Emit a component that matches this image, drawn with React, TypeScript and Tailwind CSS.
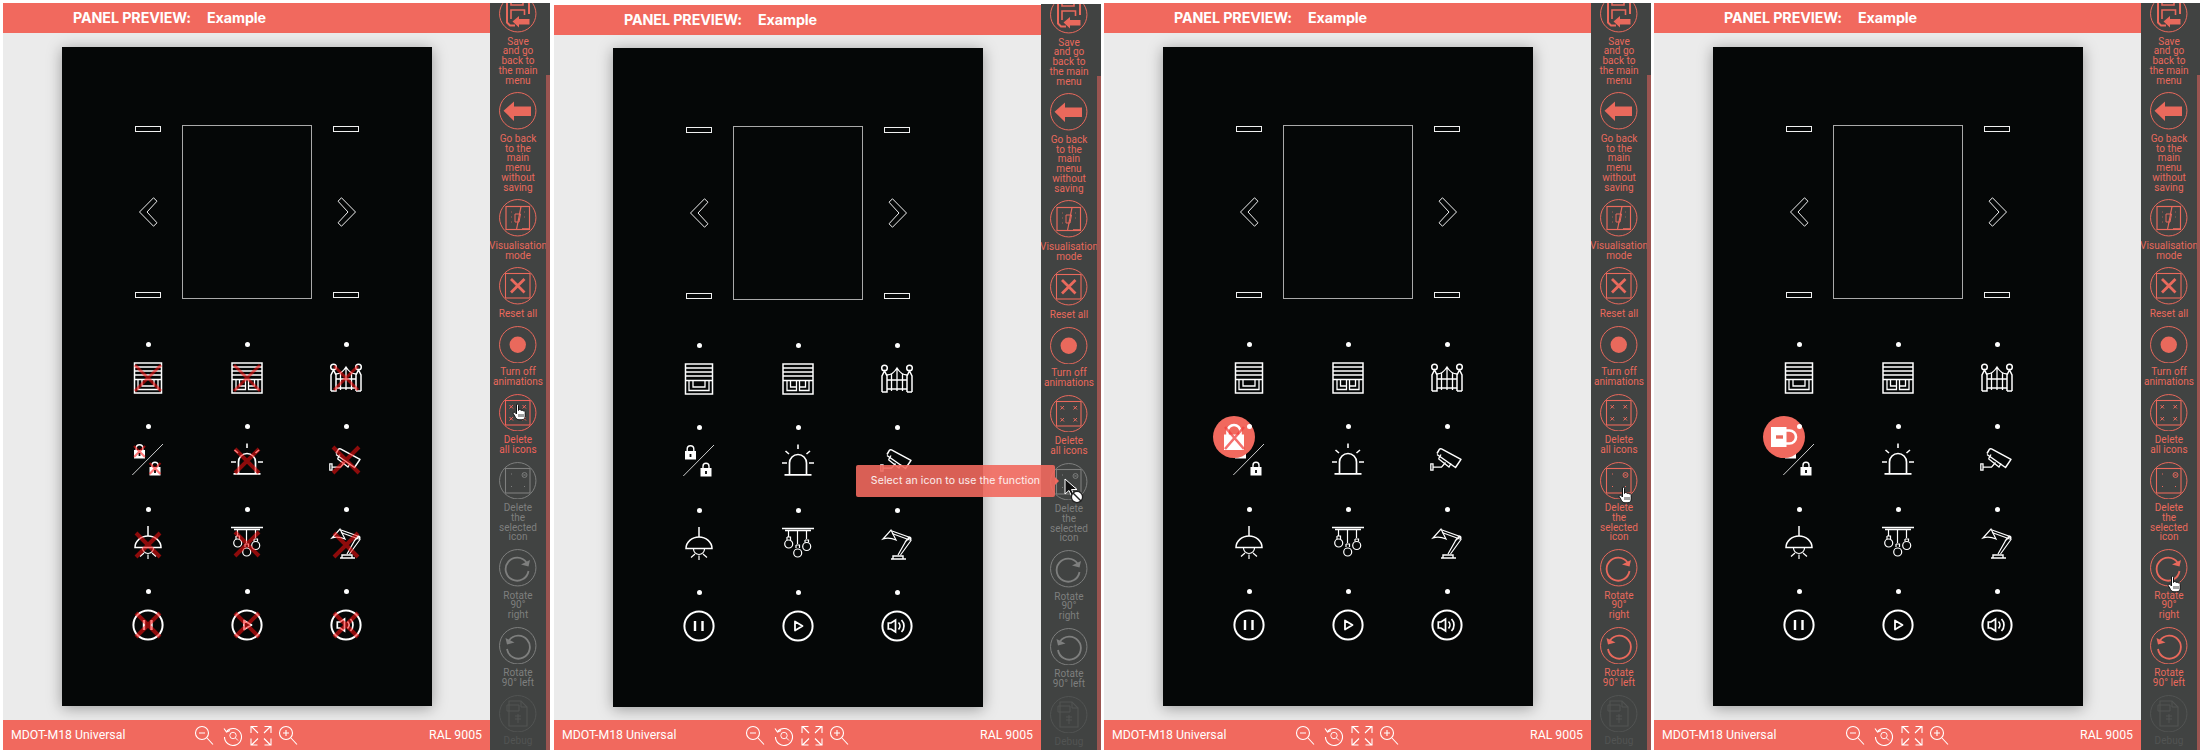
import React from "react";

const RED = "#e9695c";

type IconProps = { crossed?: boolean };
const X = ({ c = 17, r = 12, w = 4, cy }: { c?: number; r?: number; w?: number; cy?: number }) => {
  const y = cy ?? c;
  return (
    <g stroke="#ff0f0f" strokeOpacity="0.55" strokeWidth={w} fill="none">
      <path d={`M${c - r} ${y - r}L${c + r} ${y + r}M${c + r} ${y - r}L${c - r} ${y + r}`} />
    </g>
  );
};

const S = ({ children }: { children: React.ReactNode }) => (
  <svg width="34" height="34" viewBox="0 0 34 34" fill="none" stroke="#fff" strokeWidth="1.5" className="block overflow-visible">
    {children}
  </svg>
);

const Blind1 = ({ crossed }: IconProps) => (
  <S>
    <rect x="3.5" y="2" width="27" height="30" />
    <path d="M3.5 6H30.5M3.5 10H30.5M3.5 14H30.5M3.5 18.5H30.5" />
    <path d="M7 19V28.5H27V19M11 19V25H23V19" strokeWidth="1.3" />
    {crossed && <X r={13} w={3} />}
  </S>
);
const Blind2 = ({ crossed }: IconProps) => (
  <S>
    <rect x="2" y="2" width="30" height="30" />
    <path d="M2 6H32M2 10H32M2 14H32M2 18.5H32" />
    <path d="M6 19V28.5H15.5V19M18.5 19V28.5H28V19M9.5 19V25H15.5M18.5 25H24.5V19" strokeWidth="1.3" />
    {crossed && <X r={13} w={3} />}
  </S>
);
const Gate = ({ crossed }: IconProps) => (
  <S>
    <circle cx="4.5" cy="6" r="2.8" />
    <circle cx="29.5" cy="6" r="2.8" />
    <path d="M2 30V14L4.5 9L7 14V30H2M32 30V14L29.5 9L27 14V30H27" />
    <path d="M7 27H27M7 18H27M7 13C11 13 14 11 17 6C20 11 23 13 27 13M11.5 12V29M17 6V29M22.5 12V29" strokeWidth="1.3" />
    <path d="M27 30H32" />
    {crossed && <X r={12} w={3} />}
  </S>
);
const Lock = ({ x, y, crossed, open }: { x: number; y: number; crossed?: boolean; open?: boolean }) => (
  <g transform={`translate(${x} ${y})`}>
    <path d={open ? "M2.5 6V3.8A3 3 0 0 1 8.5 3.8V6" : "M2.2 6V3.6A3.3 3.3 0 0 1 8.8 3.6V6"} strokeWidth="1.4" />
    <rect x="0" y="5.5" width="11" height="8.5" fill="#fff" stroke="none" />
    <path d="M5.5 8.5V11.5" stroke="#050707" strokeWidth="1.8" />
    {crossed && <X c={5.5} cy={7} r={5.5} w={2.2} />}
  </g>
);
const Locks = ({ crossed }: IconProps) => (
  <S>
    <path d="M1.3 32L32 1" strokeWidth="0.8" />
    <Lock x={3} y={1.5} crossed={crossed} />
    <Lock x={18.5} y={18.5} crossed={crossed} open />
  </S>
);
const Beacon = ({ crossed }: IconProps) => (
  <S>
    <path d="M17 .5V5M4.5 7L8 10M29 7L25.5 10M1 19H6M28 19H33" strokeWidth="1.6" />
    <path d="M8.5 30V19A8.5 8.5 0 0 1 25.5 19V30M3.5 30.8H30.5" strokeWidth="1.7" />
    {crossed && <X cy={18} r={12} w={4} />}
  </S>
);
const Camera = ({ crossed }: IconProps) => (
  <S>
    <path d="M7 10.5L9.5 6.2Q10.3 5.3 11.5 5.9L31 16.3L25.5 24.5L7 11.5" strokeLinejoin="round" />
    <path d="M8.5 15.8L11 11.5M8.5 15.8L19 24L21 20.5" strokeWidth="1.3" />
    <path d="M.8 20.8H3V27.2H.8ZM3 24.2H11.5L15.5 19.5" strokeWidth="1.3" />
    {crossed && <X cy={17} r={13} w={4} />}
  </S>
);
const Pendant = ({ crossed }: IconProps) => (
  <S>
    <path d="M17 0V10" />
    <path d="M4 21.5A13 11.5 0 0 1 30 21.5Z" />
    <path d="M11.5 22A5.5 5.5 0 0 0 22.5 22" strokeWidth="1.2" />
    <path d="M17 28.5V33M9 30.5L13 27M25 30.5L21 27" strokeWidth="1.2" />
    {crossed && <X cy={19} r={12} w={4} />}
  </S>
);
const Chandelier = ({ crossed }: IconProps) => (
  <S>
    <path d="M1 1.5H33M4 3.5H30" strokeWidth="1.5" />
    <path d="M7.5 3V10M16.5 3V17M25.5 3V12" strokeWidth="1.2" />
    <g strokeWidth="1.2">
      <path d="M6 10H9.5V13M6 10V13M15 18H18.5V21M15 18V21M24 13H27.5V15.5M24 13V15.5" />
      <circle cx="7.7" cy="17" r="4" />
      <circle cx="16.7" cy="26" r="4" />
      <circle cx="25.7" cy="19.5" r="4" />
    </g>
    {crossed && <X cy={18} r={12} w={4} />}
  </S>
);
const DeskLamp = ({ crossed }: IconProps) => (
  <S>
    <path d="M3 12L11 3L16 13Q9 10 3 12Z" strokeWidth="1.2" />
    <path d="M12 4L30 10.5L25 15M12 6.5L27 12L18 28M30 10.5L31 13.5L20.5 28" strokeWidth="1.2" />
    <circle cx="29.5" cy="11.5" r="1.5" strokeWidth="1.1" />
    <path d="M11 32H26M13 32V29H23V32" strokeWidth="1.4" />
    {crossed && <X cy={19} r={12} w={4} />}
  </S>
);
const Ring = ({ children, crossed }: IconProps & { children: React.ReactNode }) => (
  <S>
    <circle cx="17" cy="17" r="14.6" strokeWidth="2" />
    {children}
    {crossed && <X r={12} w={4} />}
  </S>
);
const Pause = ({ crossed }: IconProps) => (
  <Ring crossed={crossed}>
    <path d="M13 12V22M20.5 12V22" strokeWidth="2.4" />
  </Ring>
);
const Play = ({ crossed }: IconProps) => (
  <Ring crossed={crossed}>
    <path d="M14 12.5L21.5 17L14 21.5Z" strokeWidth="1.8" strokeLinejoin="round" />
  </Ring>
);
const Volume = ({ crossed }: IconProps) => (
  <Ring crossed={crossed}>
    <path d="M8.3 14H11L15.5 11V23L11 20H8.3Z" strokeWidth="1.7" />
    <path d="M18.5 13.5A5 5 0 0 1 18.5 20.5M21.5 11A8.5 8.5 0 0 1 21.5 23" strokeWidth="1.7" />
  </Ring>
);

const SI = ({ children }: { children: React.ReactNode }) => (
  <svg width="37.5" height="37.5" viewBox="0 0 37.5 37.5" fill="none" stroke="currentColor" strokeWidth="1" className="block">
    <circle cx="18.75" cy="18.75" r="18.2" />
    {children}
  </svg>
);

const SideIcons: Record<string, React.ReactNode> = {
  save: (
    <>
      <path d="M8 3V27.5L11 30.5H16M30 19V8L25 3H8" strokeWidth="2" />
      <path d="M12 3V10H24V3M19 5V8M12 24V15H25.5V20" strokeWidth="1.6" />
      <path d="M13.5 26.5L20 21V24H30.5V29.5H20V32.5Z" fill="currentColor" stroke="none" />
    </>
  ),
  back: <path d="M4.5 18.75L15 9.5V14.5H32V24H15V29Z" fill="currentColor" stroke="none" />,
  vis: (
    <>
      <rect x="7" y="7.5" width="23.5" height="23" strokeWidth="1.2" />
      <path d="M22 7.5L17.5 30.5" strokeWidth="1.2" />
      <path d="M16 15H21.5L20 23H16Z" strokeWidth="1" />
      <path d="M12 13H12.8M12 18H12.8M12 23H12.8M25 13H25.8M25 18H25.8M23 29.5H30" strokeWidth=".8" />
    </>
  ),
  reset: (
    <>
      <rect x="6.5" y="6.5" width="24.5" height="24.5" strokeWidth="1.1" />
      <path d="M12 12L25.5 25.5M25.5 12L12 25.5" strokeWidth="2.8" />
    </>
  ),
  rec: <circle cx="18.75" cy="18.75" r="8.2" fill="currentColor" stroke="none" />,
  delAll: (
    <>
      <rect x="6.5" y="6.5" width="24.5" height="24.5" strokeWidth="1.1" />
      <path d="M10.5 11L14 14.5M14 11L10.5 14.5M23.5 11L27 14.5M27 11L23.5 14.5M10.5 23L14 26.5M14 23L10.5 26.5M23.5 23L27 26.5M27 23L23.5 26.5" strokeWidth="1" />
    </>
  ),
  delOne: (
    <>
      <rect x="6.5" y="6.5" width="24.5" height="24.5" strokeWidth="1.1" />
      <circle cx="25.5" cy="13" r="2.5" strokeWidth=".9" />
      <path d="M24 11.5L27 14.5M27 11.5L24 14.5" strokeWidth=".7" />
      <path d="M12 12H13M12 24.5H13M25 24.5H26" strokeWidth="1" />
    </>
  ),
  rotR: (
    <>
      <path d="M27.5 13.5A11.5 11.5 0 1 0 29.5 22" strokeWidth="1.8" />
      <path d="M22 15.5L29.5 17.5L31 11Z" fill="currentColor" stroke="none" />
    </>
  ),
  rotL: (
    <>
      <path d="M10 13.5A11.5 11.5 0 1 1 8 22" strokeWidth="1.8" />
      <path d="M15.5 15.5L8 17.5L6.5 11Z" fill="currentColor" stroke="none" />
    </>
  ),
  debug: (
    <>
      <path d="M10 6H22L28 12V31H10Z" strokeWidth="1.1" />
      <path d="M22 6V12H28M8 10H20V16H8ZM19 19V28M16 21H22M16 24H22" strokeWidth="1" />
    </>
  ),
};

type Tone = "on" | "hot" | "off" | "dim";
const toneText: Record<Tone, string> = {
  on: "text-[#e9695c]",
  hot: "text-[#f0625a]",
  off: "text-[#7e7f7e]",
  dim: "text-[#525453]",
};

const items: { key: string; lines: string[] }[] = [
  { key: "save", lines: ["Save", "and go", "back to", "the main", "menu"] },
  { key: "back", lines: ["Go back", "to the", "main", "menu", "without", "saving"] },
  { key: "vis", lines: ["Visualisation", "mode"] },
  { key: "reset", lines: ["Reset all"] },
  { key: "rec", lines: ["Turn off", "animations"] },
  { key: "delAll", lines: ["Delete", "all icons"] },
  { key: "delOne", lines: ["Delete", "the", "selected", "icon"] },
  { key: "rotR", lines: ["Rotate", "90°", "right"] },
  { key: "rotL", lines: ["Rotate", "90° left"] },
  { key: "debug", lines: ["Debug"] },
];

const Hand = () => (
  <svg width="15" height="18" viewBox="0 0 15 18" className="block">
    <path d="M4.5 1.5C5.5 .8 6.5 1.3 6.5 2.5V7.5L7.5 6.5C8.5 6.3 9 6.8 9 7.5C10 6.8 11 7.2 11 8C12 7.5 13.2 8 13.2 9.2V13C13.2 15 12 16.8 10 16.8H7C5.5 16.8 4.5 16 3.5 14.5L1.2 10.5C.8 9.5 2 8.6 3 9.5L4.5 11Z" fill="#fff" stroke="#111" strokeWidth="1" />
    <path d="M7 11V14M9 11V14M11 11V14" stroke="#111" strokeWidth=".8" />
  </svg>
);

const Sidebar = ({ tones, hand, top }: { tones: Tone[]; hand?: string; top: string }) => (
  <div className="w-[60px] h-full bg-[#414342] overflow-hidden relative shrink-0">
    <div className="absolute right-0 bottom-0 top-[72px] w-[4px] bg-[#9a5450]" />
    <div className={`flex flex-col items-center w-[56px] gap-[7px] ${top}`}>
      {items.map((it, i) => (
        <div key={it.key} className={`flex flex-col items-center w-full ${toneText[tones[i]]}`}>
          <div className="relative mb-[4px]">
            <SI>{SideIcons[it.key]}</SI>
            {hand === it.key && (
              <div className={`absolute ${it.key === "rotR" ? "left-[17px] top-[26px]" : it.key === "delOne" ? "left-[18px] top-[24px]" : "left-[13px] top-[9px]"}`}>
                <Hand />
              </div>
            )}
          </div>
          <div className="font-['Roboto',sans-serif] text-[10px] leading-[9.75px] tracking-[0.05px] text-center whitespace-nowrap">
            {it.lines.map((l) => (
              <div key={l}>{l}</div>
            ))}
          </div>
        </div>
      ))}
    </div>
  </div>
);

const Dash = () => <div className="w-[26px] h-[6px] border border-[#f0f0f0]" />;
const ChevL = () => (
  <svg width="19" height="30" viewBox="0 0 19 30" fill="none" stroke="#f0f0f0" strokeWidth="1" className="block">
    <path d="M0.5 15L14.5 .8L18 4.2L8 15L18 25.8L14.5 29.2Z" />
  </svg>
);
const ChevR = () => (
  <svg width="19" height="30" viewBox="0 0 19 30" fill="none" stroke="#f0f0f0" strokeWidth="1" className="block">
    <path d="M18.5 15L4.5 .8L1 4.2L11 15L1 25.8L4.5 29.2Z" />
  </svg>
);

const BigLock = ({ rotated, crossed }: { rotated?: boolean; crossed?: boolean }) => (
  <svg width="28" height="28" viewBox="0 0 28 28" fill="none" className="block overflow-visible">
    <g transform={rotated ? "rotate(90 14 14)" : undefined}>
      <path d="M7.5 12V8.5A6.5 6.5 0 0 1 20.5 8.5V12" stroke="#fff" strokeWidth="2.6" />
      <rect x="4" y="11.5" width="20" height="15.5" fill="#fff" />
      {rotated && <path d="M14 15V22" stroke={RED} strokeWidth="3.4" />}
    </g>
    {crossed && <path d="M5 4L24 26M24 4L5 26M14 14V17" stroke="#f2403e" strokeOpacity=".75" strokeWidth="2.6" />}
  </svg>
);

const Cell = ({ children, sel }: { children: React.ReactNode; sel?: React.ReactNode }) => (
  <div className="relative flex flex-col items-center gap-[14px]">
    <div className="relative z-10 w-[5px] h-[5px] rounded-full bg-white" />
    <div className="w-[34px] h-[34px]">{children}</div>
    {sel}
  </div>
);

const Panel = ({ crossed, sel, shift }: { crossed?: boolean; sel?: "a" | "b"; shift: string }) => (
  <div className={`w-[370px] h-[659px] bg-[#050707] shadow-[0_2px_14px_rgba(0,0,0,0.35)] flex flex-col items-center ${shift}`}>
    <div className="grid grid-cols-[68px_130px_68px] h-[174px] mt-[78px] justify-center">
      <div className="flex flex-col items-center justify-between py-[1px]">
        <Dash />
        <ChevL />
        <Dash />
      </div>
      <div className="border border-[#a9a9a9]" />
      <div className="flex flex-col items-center justify-between py-[1px]">
        <Dash />
        <ChevR />
        <Dash />
      </div>
    </div>
    <div className="grid grid-cols-[99px_99px_99px] justify-center gap-y-[29.4px] mt-[43px]">
      <Cell><Blind1 crossed={crossed} /></Cell>
      <Cell><Blind2 crossed={crossed} /></Cell>
      <Cell><Gate crossed={crossed} /></Cell>
      <Cell
        sel={
          sel && (
            <div className="absolute left-[13px] top-[-8px] w-[42px] h-[42px] rounded-full bg-[#f1695e] flex items-center justify-center">
              <BigLock rotated={sel === "b"} crossed={sel === "a"} />
            </div>
          )
        }
      >
        <Locks crossed={crossed} />
      </Cell>
      <Cell><Beacon crossed={crossed} /></Cell>
      <Cell><Camera crossed={crossed} /></Cell>
      <Cell><Pendant crossed={crossed} /></Cell>
      <Cell><Chandelier crossed={crossed} /></Cell>
      <Cell><DeskLamp crossed={crossed} /></Cell>
      <Cell><Pause crossed={crossed} /></Cell>
      <Cell><Play crossed={crossed} /></Cell>
      <Cell><Volume crossed={crossed} /></Cell>
    </div>
  </div>
);

const F = ({ children }: { children: React.ReactNode }) => (
  <svg width="20" height="20" viewBox="0 0 20 20" fill="none" stroke="#fff" strokeWidth="1.1" className="block overflow-visible">
    {children}
  </svg>
);

const Footer = () => (
  <div className="h-[30px] bg-[#f1695e] flex items-center justify-between pl-[8px] pr-[8px] text-white font-['Roboto',sans-serif] text-[12.3px] relative shrink-0">
    <span>MDOT-M18 Universal</span>
    <div className="absolute left-[192px] top-[6px] flex items-center gap-[8px]">
      <F>
        <circle cx="7" cy="7" r="6.5" />
        <path d="M12 12L18 18.5M4 7H10" />
      </F>
      <F>
        <path d="M3.5 5.5A8.5 8.5 0 1 1 1.5 11" stroke="#fff" />
        <path d="M1 2.5L3.5 6L7 4.5" />
        <circle cx="10" cy="9.5" r="3.2" strokeWidth=".9" />
        <path d="M12.5 12L15 14.5" strokeWidth=".9" />
      </F>
      <F>
        <path d="M0 7V0.5H6.5M0.5 0.5L7 7M20 7V0.5H13.5M19.5 0.5L13 7M0 12.5V19H6.5M0.5 19L7 12.5M20 12.5V19H13.5M19.5 19L13 12.5" />
      </F>
      <F>
        <circle cx="7" cy="7" r="6.5" />
        <path d="M12 12L18 18.5M4 7H10M7 4V10" />
      </F>
    </div>
    <span>RAL 9005</span>
  </div>
);

const Forbidden = () => (
  <svg width="22" height="26" viewBox="0 0 22 26" className="block">
    <path d="M2 1V16L6 12.5L8.5 18L11 17L8.5 11.5H14Z" fill="#111" stroke="#fff" strokeWidth="1" />
    <circle cx="14" cy="19" r="5.6" fill="#fff" stroke="#222" strokeWidth="1.3" />
    <path d="M10 15L18 23" stroke="#222" strokeWidth="1.4" />
  </svg>
);

type PaneProps = {
  cls: string;
  headTop: string;
  sideTop: string;
  panelShift: string;
  tones: Tone[];
  hand?: string;
  crossed?: boolean;
  sel?: "a" | "b";
  tooltip?: boolean;
};

const Pane = ({ cls, headTop, sideTop, panelShift, tones, hand, crossed, sel, tooltip }: PaneProps) => (
  <div className={`h-[750px] relative overflow-hidden flex items-start shrink-0 ${cls}`}>
    <div className="w-[487px] h-full flex flex-col bg-[#ebebeb] shrink-0">
      <div className={`bg-white shrink-0 ${headTop}`} />
      <div className="h-[30px] bg-[#f1695e] shrink-0 flex items-center gap-[16px] pl-[70px] text-white font-['Inter',sans-serif] font-bold text-[14.3px] tracking-[-0.1px]">
        <span>PANEL PREVIEW:</span>
        <span>Example</span>
      </div>
      <div className="flex-1 min-h-0 pl-[59px]">
        <Panel crossed={crossed} sel={sel} shift={panelShift} />
      </div>
      <Footer />
    </div>
    <div className="h-full flex flex-col shrink-0">
      <div className={`bg-white shrink-0 ${sideTop}`} />
      <div className="flex-1 min-h-0">
        <Sidebar tones={tones} hand={hand} top="-mt-[8px]" />
      </div>
    </div>
    {tooltip && (
      <>
        <div className="absolute left-[305px] top-[465px] w-[199px] h-[32px] rounded-[2px] bg-[#f1695e]/90 flex items-center justify-center text-white/90 font-['Inter',sans-serif] text-[10.5px] tracking-[0.1px] whitespace-nowrap">
          Select an icon to use the function
        </div>
        <div className="absolute left-[504px] top-[477px] w-0 h-0 border-y-[4px] border-y-transparent border-l-[4px] border-l-[#f1695e]" />
        <div className="absolute left-[512px] top-[478px]">
          <Forbidden />
        </div>
      </>
    )}
  </div>
);

export default function App() {
  const active: Tone[] = ["on", "on", "on", "on", "on", "on", "on", "on", "on", "dim"];
  const idle: Tone[] = ["on", "on", "on", "on", "on", "on", "off", "off", "off", "dim"];
  const hot: Tone[] = ["on", "on", "on", "on", "on", "hot", "off", "off", "off", "dim"];
  return (
    <div className="w-[2200px] h-[750px] bg-white flex overflow-hidden">
      <Pane cls="w-[551px] pl-[3px]" headTop="h-[3px]" sideTop="h-[3px]" panelShift="mt-[14px]" tones={hot} hand="delAll" crossed />
      <Pane cls="w-[550px] pl-[3px]" headTop="h-[5px]" sideTop="h-[4px]" panelShift="mt-[13px]" tones={idle} tooltip />
      <Pane cls="w-[550px] pl-[3px]" headTop="h-[3px]" sideTop="h-[3px]" panelShift="mt-[14px]" tones={active} hand="delOne" sel="a" />
      <Pane cls="w-[549px] pl-[3px]" headTop="h-[3px]" sideTop="h-[3px]" panelShift="mt-[14px]" tones={active} hand="rotR" sel="b" />
    </div>
  );
}
